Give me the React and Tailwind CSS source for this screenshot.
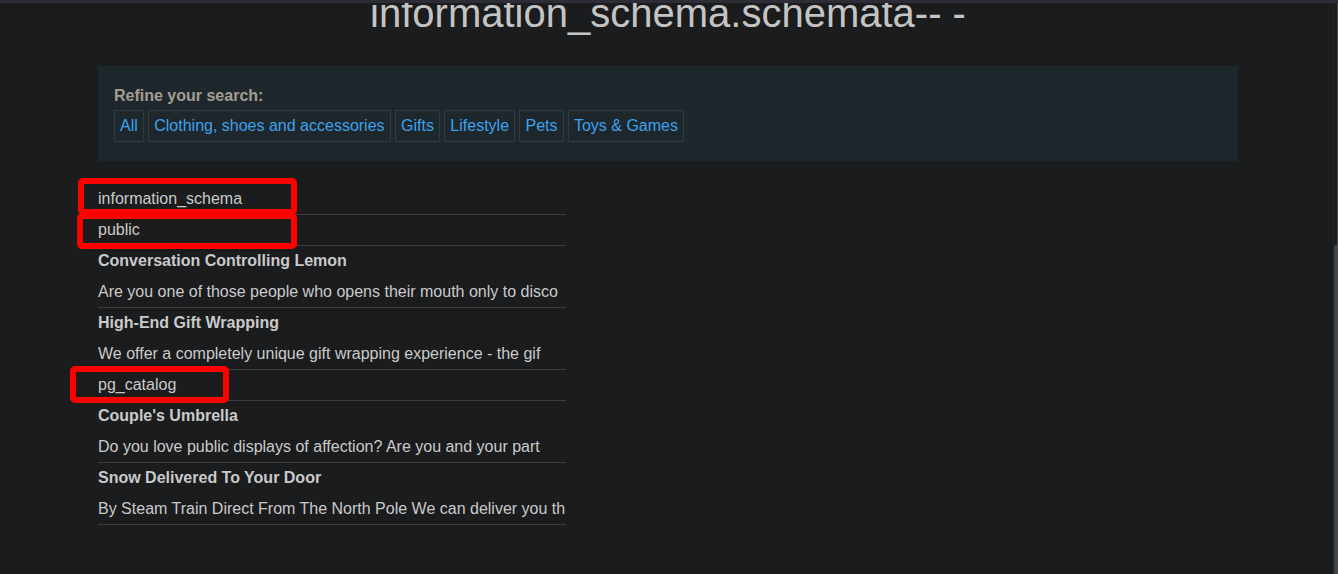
import React from 'react';

const tags = ['All', 'Clothing, shoes and accessories', 'Gifts', 'Lifestyle', 'Pets', 'Toys & Games'];

const rows = [
  { name: 'information_schema' },
  { name: 'public' },
  { title: 'Conversation Controlling Lemon', desc: 'Are you one of those people who opens their mouth only to disco' },
  { title: 'High-End Gift Wrapping', desc: 'We offer a completely unique gift wrapping experience - the gif' },
  { name: 'pg_catalog' },
  { title: "Couple's Umbrella", desc: 'Do you love public displays of affection? Are you and your part' },
  { title: 'Snow Delivered To Your Door', desc: 'By Steam Train Direct From The North Pole We can deliver you th' },
];

const Row = ({ row }) => {
  if (row.name) {
    return (
      <div className="pt-[3px] pb-[3px] leading-6 border-b border-[#3a3c40] whitespace-nowrap">{row.name}</div>
    );
  }
  return (
    <div className="border-b border-[#3a3c40]">
      <div className="pt-[3px] pb-[4px] leading-6 font-bold whitespace-nowrap">{row.title}</div>
      <div className="pt-[3px] pb-[3px] leading-6 whitespace-nowrap">{row.desc}</div>
    </div>
  );
};

export default function App() {
  return (
    <div className="h-[574px] w-full flex flex-col bg-[#1b1c1e] overflow-hidden font-['Liberation_Sans',Arial,sans-serif]">
      <div className="h-[3px] bg-[#2d2e35]" />
      <div className="flex flex-1 min-h-0">
        <main className="relative flex-1 overflow-hidden">
          <h1 className="-mt-[14px] pl-[3px] text-[40px] leading-[48px] text-center text-[#c4c4c4]">
            information_schema.schemata-- -
          </h1>

          <section className="mt-[29px] ml-[98px] w-[1140px] bg-[#1e282c] px-4 pt-[18px] pb-[19px]">
            <div className="text-base leading-6 font-bold text-[#a39d94]">Refine your search:</div>
            <div className="mt-[2px] flex gap-[4.45px]">
              {tags.map((t) => (
                <a key={t} className="h-[32px] flex items-center px-[5px] border border-[#2f3c41] text-base text-[#3ca2ee]">
                  {t}
                </a>
              ))}
            </div>
          </section>

          <div className="mt-[23px] ml-[98px] w-[468px] text-base text-[#cacaca]">
            {rows.map((r, i) => (
              <Row key={i} row={r} />
            ))}
          </div>

          {/* annotation boxes */}
          <div className="absolute left-[78px] top-[175px] w-[219px] h-[37px] border-[6px] border-[#ff0000] rounded-[5px]" />
          <div className="absolute left-[77px] top-[210px] w-[220px] h-[36px] border-[6px] border-[#ff0000] rounded-[5px]" />
          <div className="absolute left-[70px] top-[363px] w-[159px] h-[37px] border-[6px] border-[#ff0000] rounded-[5px]" />
        </main>

        <div className="w-[5px] flex border-l border-[#222326]">
          <div className="w-[3px] flex flex-col">
            <div className="h-[242px]" />
            <div className="flex-1 bg-[#3f4246] rounded-t-[1px]" />
          </div>
          <div className="w-[1px] bg-[#4c4e52]" />
        </div>
      </div>
    </div>
  );
}
